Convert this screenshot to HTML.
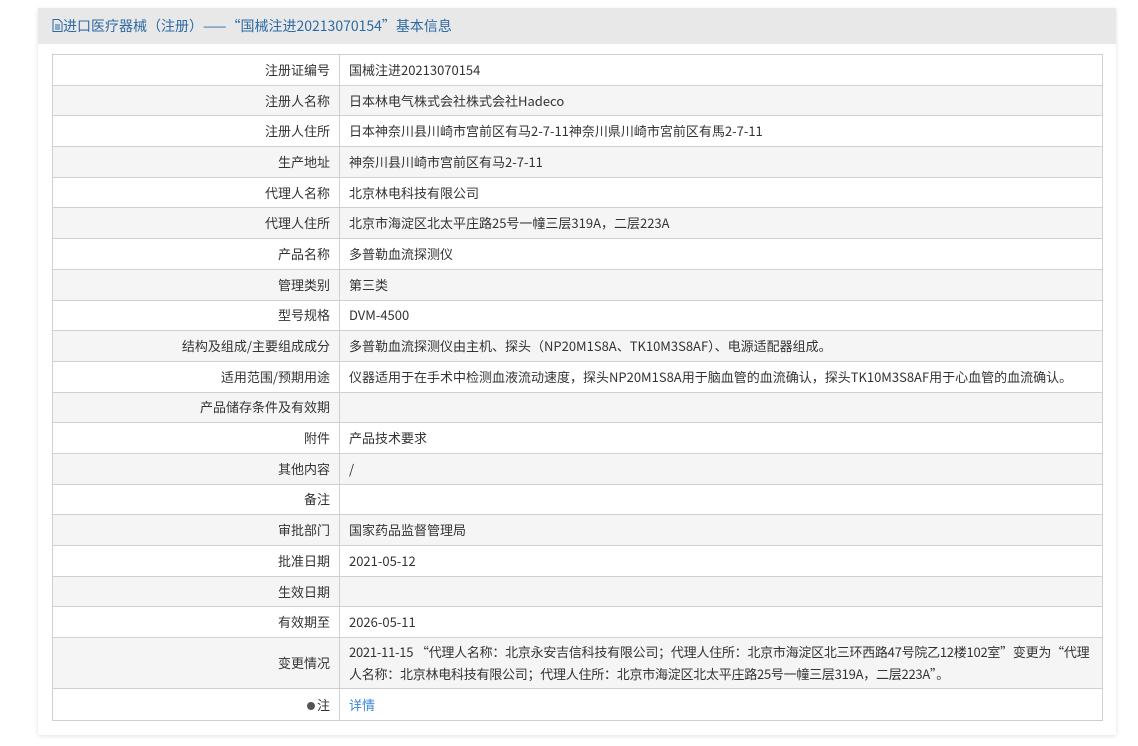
<!DOCTYPE html>
<html><head><meta charset="utf-8"><style>
html,body{margin:0;padding:0;background:#fff;width:1138px;height:746px;overflow:hidden}
body{font-family:"Noto Sans CJK SC","Liberation Sans",sans-serif;font-size:13px;color:#333}
.panel{position:absolute;left:38px;top:8px;width:1078px;height:727px;background:#fff;box-shadow:0 1px 4px rgba(0,0,0,0.12)}
.hd{height:36px;background:#e8e8e8;color:#2d6aa3;font-size:14px;line-height:36px;padding-left:14px}
table{position:absolute;left:14px;top:46px;width:1051px;border-collapse:collapse;table-layout:fixed}
td{border:1px solid #d0d0d0;height:29.7px;padding:0 9px;line-height:22px}
tr:nth-child(even) td{background:#f5f5f5}
td.l{text-align:right}
a{color:#3a86d8;text-decoration:none}
</style></head><body>
<div class="panel">
<div class="hd"><svg width="11" height="13" viewBox="0 0 11 13" style="vertical-align:-1px"><path d="M1 .5h6l3 3v9H1z" fill="none" stroke="#2d6aa3"/><path d="M3 6h5M3 8h5M3 10h5" stroke="#2d6aa3"/></svg>进口医疗器械（注册）——“国械注进20213070154”基本信息</div>
<table>
<colgroup><col style="width:287px"><col></colgroup>
<tr><td class="l">注册证编号</td><td>国械注进20213070154</td></tr>
<tr><td class="l">注册人名称</td><td>日本林电气株式会社株式会社Hadeco</td></tr>
<tr><td class="l">注册人住所</td><td>日本神奈川县川崎市宫前区有马2-7-11神奈川県川崎市宮前区有馬2-7-11</td></tr>
<tr><td class="l">生产地址</td><td>神奈川县川崎市宫前区有马2-7-11</td></tr>
<tr><td class="l">代理人名称</td><td>北京林电科技有限公司</td></tr>
<tr><td class="l">代理人住所</td><td>北京市海淀区北太平庄路25号一幢三层319A，二层223A</td></tr>
<tr><td class="l">产品名称</td><td>多普勒血流探测仪</td></tr>
<tr><td class="l">管理类别</td><td>第三类</td></tr>
<tr><td class="l">型号规格</td><td>DVM-4500</td></tr>
<tr><td class="l">结构及组成/主要组成成分</td><td>多普勒血流探测仪由主机、探头（NP20M1S8A、TK10M3S8AF）、电源适配器组成。</td></tr>
<tr><td class="l">适用范围/预期用途</td><td>仪器适用于在手术中检测血液流动速度，探头NP20M1S8A用于脑血管的血流确认，探头TK10M3S8AF用于心血管的血流确认。</td></tr>
<tr><td class="l">产品储存条件及有效期</td><td></td></tr>
<tr><td class="l">附件</td><td>产品技术要求</td></tr>
<tr><td class="l">其他内容</td><td>/</td></tr>
<tr><td class="l">备注</td><td></td></tr>
<tr><td class="l">审批部门</td><td>国家药品监督管理局</td></tr>
<tr><td class="l">批准日期</td><td>2021-05-12</td></tr>
<tr><td class="l">生效日期</td><td></td></tr>
<tr><td class="l">有效期至</td><td>2026-05-11</td></tr>
<tr><td class="l" style="height:50px">变更情况</td><td style="padding-top:2px;padding-bottom:2px;white-space:nowrap;overflow:hidden;letter-spacing:-0.25px">2021-11-15 “代理人名称：北京永安吉信科技有限公司；代理人住所：北京市海淀区北三环西路47号院乙12楼102室”变更为“代理<br>人名称：北京林电科技有限公司；代理人住所：北京市海淀区北太平庄路25号一幢三层319A，二层223A”。</td></tr>
<tr><td class="l" style="height:31px"><span style="display:inline-block;width:8px;height:8px;border-radius:50%;background:#555;margin-right:2px"></span>注</td><td><a>详情</a></td></tr>
</table>
</div>
</body></html>
